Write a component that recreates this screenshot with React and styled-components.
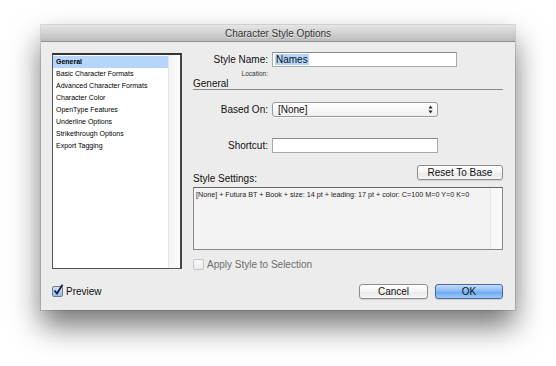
import React from "react";
import styled, { createGlobalStyle } from "styled-components";

const Global = createGlobalStyle`
  html, body {
    margin: 0;
    background: #ffffff;
    font-family: "Liberation Sans", Arial, sans-serif;
  }
`;

const Page = styled.div`
  width: 556px;
  height: 366px;
  padding: 25px 0 0 41px;
  box-sizing: border-box;
  overflow: hidden;
`;

const Window = styled.div`
  width: 474px;
  height: 285px;
  background: #ececec;
  box-shadow: 0 16px 28px rgba(0, 0, 0, 0.55), 0 0 0 1px rgba(0, 0, 0, 0.12);
  display: flex;
  flex-direction: column;
`;

const TitleBar = styled.div`
  height: 16px;
  flex: none;
  background: linear-gradient(#e6e6e6, #bcbcbc);
  border-bottom: 1px solid #8f8f8f;
  display: flex;
  align-items: center;
  justify-content: center;
  font-size: 10px;
  color: #333;
  text-shadow: 0 1px 0 rgba(255, 255, 255, 0.6);
`;

const Body = styled.div`
  flex: 1;
  padding: 10px 12px 11px 11px;
  display: flex;
  flex-direction: column;
`;

const Main = styled.div`
  display: flex;
  gap: 11px;
`;

const ListBox = styled.div`
  width: 130px;
  height: 216px;
  box-sizing: border-box;
  border: 1px solid #555;
  border-top: 2px solid #333;
  border-right: 2px solid #444;
  background: #fff;
  display: flex;
  margin-top: 1px;
`;

const Items = styled.div`
  flex: 1;
  padding-top: 1px;
`;

const Scroll = styled.div`
  width: 11px;
  border-left: 1px solid #e4e4e4;
  background: linear-gradient(90deg, #f4f4f4, #fbfbfb);
`;

const Item = styled.div`
  height: 12px;
  line-height: 12px;
  padding-left: 3px;
  font-size: 7px;
  font-weight: ${(p) => (p.$active ? "bold" : "normal")};
  color: #000;
  background: ${(p) => (p.$active ? "#b5d5fb" : "transparent")};
  white-space: nowrap;
`;

const Form = styled.div`
  flex: 1;
  display: flex;
  flex-direction: column;
`;

const Row = styled.div`
  display: flex;
  align-items: center;
  gap: 4px;
  margin-top: ${(p) => p.$mt || 0}px;
`;

const Label = styled.div`
  width: 75px;
  text-align: right;
  font-size: 10px;
  color: #111;
`;

const Small = styled.div`
  width: 75px;
  text-align: right;
  font-size: 6.5px;
  color: #333;
  margin-top: 3px;
`;

const TextInput = styled.div`
  width: ${(p) => p.$w}px;
  height: 15px;
  box-sizing: border-box;
  background: #fff;
  border: 1px solid #a9a9a9;
  border-top-color: #8a8a8a;
  font-size: 10px;
  line-height: 13px;
  padding-left: 2px;
  color: #111;
`;

const Selected = styled.span`
  background: #b4d5fe;
  padding: 0 1px;
`;

const Section = styled.div`
  margin-top: 2px;
  font-size: 10px;
  line-height: 10px;
  color: #111;
  border-bottom: 1px solid #8c8c8c;
`;

const Select = styled.div`
  width: 166px;
  height: 15px;
  box-sizing: border-box;
  border: 1px solid #9a9a9a;
  border-radius: 3px;
  background: linear-gradient(#ffffff, #f0f0f0);
  box-shadow: 0 1px 0 rgba(255, 255, 255, 0.8);
  display: flex;
  align-items: center;
  justify-content: space-between;
  padding: 0 4px 0 5px;
  font-size: 10px;
  color: #111;
`;

const SettingsHead = styled.div`
  display: flex;
  justify-content: space-between;
  align-items: flex-end;
  margin-top: 12px;
`;

const SettingsLabel = styled.div`
  font-size: 10px;
  color: #111;
  margin-bottom: -4px;
`;

const Button = styled.div`
  width: ${(p) => p.$w}px;
  height: 15px;
  box-sizing: border-box;
  border-radius: 3px;
  border: 1px solid ${(p) => (p.$primary ? "#4a68a6" : "#8e8e8e")};
  background: ${(p) =>
    p.$primary
      ? "linear-gradient(#c5ddfa, #84b7f4 50%, #6aa6f1 51%, #9ccaf8)"
      : "linear-gradient(#ffffff, #f4f4f4 50%, #e9e9e9 51%, #f6f6f6)"};
  box-shadow: 0 1px 1px rgba(0, 0, 0, 0.12);
  display: flex;
  align-items: center;
  justify-content: center;
  font-size: 10px;
  color: #111;
`;

const TextArea = styled.div`
  margin-top: 7px;
  height: 63px;
  box-sizing: border-box;
  border: 1px solid #8a8a8a;
  border-top-color: #666;
  background: #f3f3f3;
  display: flex;
`;

const AreaText = styled.div`
  flex: 1;
  font-size: 7.2px;
  color: #222;
  padding: 2px 2px;
  white-space: nowrap;
`;

const AreaScroll = styled.div`
  width: 11px;
  border-left: 1px solid #e6e6e6;
  background: #f8f8f8;
`;

const Check = styled.div`
  display: flex;
  align-items: center;
  gap: 3px;
  margin-top: ${(p) => p.$mt || 0}px;
  font-size: 10px;
  color: ${(p) => (p.$disabled ? "#6c6c6c" : "#111")};
`;

const Box = styled.div`
  width: 9px;
  height: 9px;
  border: 1px solid ${(p) => (p.$disabled ? "#c4c4c4" : "#7a7a7a")};
  border-radius: 2px;
  background: ${(p) =>
    p.$checked ? "linear-gradient(#cfe3fb, #8fbff3)" : "linear-gradient(#fafafa, #ececec)"};
  position: relative;
`;

const Footer = styled.div`
  margin-top: auto;
  display: flex;
  align-items: center;
  justify-content: space-between;
`;

const Buttons = styled.div`
  display: flex;
  gap: 7px;
`;

const items = [
  "General",
  "Basic Character Formats",
  "Advanced Character Formats",
  "Character Color",
  "OpenType Features",
  "Underline Options",
  "Strikethrough Options",
  "Export Tagging",
];

const Arrows = () => (
  <svg width="5" height="9" viewBox="0 0 5 9">
    <path d="M2.5 0.5 L4.5 3.5 L0.5 3.5 Z" fill="#222" />
    <path d="M2.5 8.5 L4.5 5.5 L0.5 5.5 Z" fill="#222" />
  </svg>
);

const Tick = () => (
  <svg
    width="11"
    height="12"
    viewBox="0 0 11 12"
    style={{ position: "absolute", left: 0, top: -3 }}
  >
    <path d="M1.5 6.5 L4 9.5 L9.5 0.8" fill="none" stroke="#1a1a3a" strokeWidth="1.8" />
  </svg>
);

export default function App() {
  return (
    <Page>
      <Global />
      <Window>
        <TitleBar>Character Style Options</TitleBar>
        <Body>
          <Main>
            <ListBox>
              <Items>
                {items.map((t, i) => (
                  <Item key={t} $active={i === 0}>
                    {t}
                  </Item>
                ))}
              </Items>
              <Scroll />
            </ListBox>
            <Form>
              <Row>
                <Label>Style Name:</Label>
                <TextInput $w={185}>
                  <Selected>Names</Selected>
                </TextInput>
              </Row>
              <Small>Location:</Small>
              <Section>General</Section>
              <Row $mt={12}>
                <Label>Based On:</Label>
                <Select>
                  [None]
                  <Arrows />
                </Select>
              </Row>
              <Row $mt={21}>
                <Label>Shortcut:</Label>
                <TextInput $w={166} />
              </Row>
              <SettingsHead>
                <SettingsLabel>Style Settings:</SettingsLabel>
                <Button $w={86}>Reset To Base</Button>
              </SettingsHead>
              <TextArea>
                <AreaText>
                  [None] + Futura BT + Book + size: 14 pt + leading: 17 pt + color: C=100 M=0 Y=0 K=0
                </AreaText>
                <AreaScroll />
              </TextArea>
              <Check $disabled $mt={9}>
                <Box $disabled />
                Apply Style to Selection
              </Check>
            </Form>
          </Main>
          <Footer>
            <Check>
              <Box $checked>
                <Tick />
              </Box>
              Preview
            </Check>
            <Buttons>
              <Button $w={69}>Cancel</Button>
              <Button $w={68} $primary>
                OK
              </Button>
            </Buttons>
          </Footer>
        </Body>
      </Window>
    </Page>
  );
}
